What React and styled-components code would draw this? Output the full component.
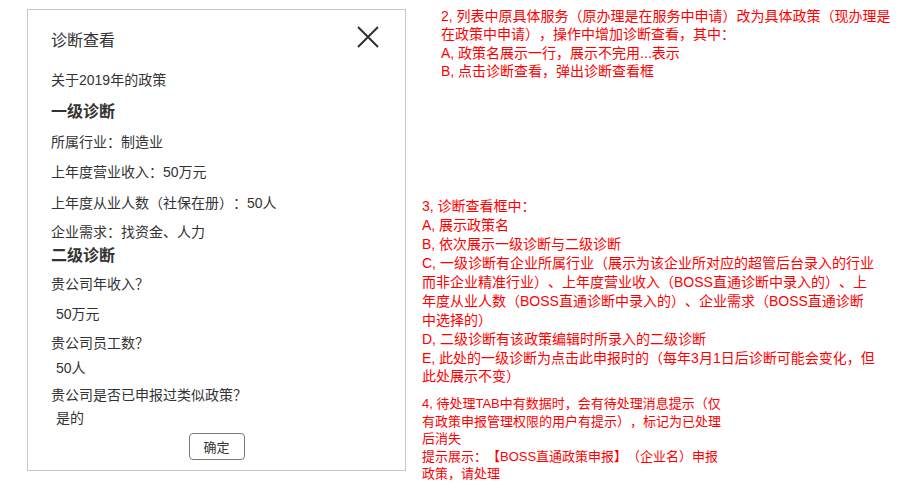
import React from 'react'
import styled, { createGlobalStyle } from 'styled-components'

const GlobalStyle = createGlobalStyle`
  body {
    margin: 0;
    background: #fff;
    font-family: "Liberation Sans", "Noto Sans CJK SC", sans-serif;
    text-spacing-trim: space-all;
  }
`

const firstNote = [
    '2, 列表中原具体服务（原办理是在服务中申请）改为具体政策（现办理是',
    '在政策中申请），操作中增加诊断查看，其中：',
    'A, 政策名展示一行，展示不完用...表示',
    'B, 点击诊断查看，弹出诊断查看框',
]

const secondNote = [
    '3, 诊断查看框中：',
    'A, 展示政策名',
    'B, 依次展示一级诊断与二级诊断',
    'C, 一级诊断有企业所属行业（展示为该企业所对应的超管后台录入的行业',
    '而非企业精准行业）、上年度营业收入（BOSS直通诊断中录入的）、上',
    '年度从业人数（BOSS直通诊断中录入的）、企业需求（BOSS直通诊断',
    '中选择的）',
    'D, 二级诊断有该政策编辑时所录入的二级诊断',
    'E, 此处的一级诊断为点击此申报时的（每年3月1日后诊断可能会变化，但',
    '此处展示不变）',
]

const thirdNote = [
    '4, 待处理TAB中有数据时，会有待处理消息提示（仅',
    '有政策申报管理权限的用户有提示），标记为已处理',
    '后消失',
    '提示展示：【BOSS直通政策申报】（企业名）申报',
    '政策，请处理',
]

const CloseIcon = () => (
    <svg width="22" height="22" viewBox="0 0 22 22">
        <path d="M1 1 L21 21 M21 1 L1 21" stroke="#2f2f3a" strokeWidth="2" fill="none" />
    </svg>
)

const App = () => {
    return (
        <Page>
            <GlobalStyle />
            <Modal>
                <Header>
                    <Title>诊断查看</Title>
                    <CloseButton><CloseIcon /></CloseButton>
                </Header>
                <Body>
                    <Line $mt={17}>关于2019年的政策</Line>
                    <Heading $mt={11}>一级诊断</Heading>
                    <Line $mt={9}>所属行业：制造业</Line>
                    <Line $mt={10}>上年度营业收入：50万元</Line>
                    <Line $mt={11}>上年度从业人数（社保在册）：50人</Line>
                    <Line $mt={9}>企业需求：找资金、人力</Line>
                    <Heading $mt={3}>二级诊断</Heading>
                    <Line $mt={7}>贵公司年收入？</Line>
                    <Line $mt={10} $answer>50万元</Line>
                    <Line $mt={9}>贵公司员工数？</Line>
                    <Line $mt={5} $answer>50人</Line>
                    <Line $mt={7}>贵公司是否已申报过类似政策？</Line>
                    <Line $mt={3} $answer>是的</Line>
                    <Footer>
                        <OkButton>确定</OkButton>
                    </Footer>
                </Body>
            </Modal>
            <Notes>
                <NoteBlock $indent={19} $lh={18.33}>
                    {firstNote.map((l) => <NoteLine key={l}>{l}</NoteLine>)}
                </NoteBlock>
                <NoteBlock $mt={117} $lh={18.9}>
                    {secondNote.map((l) => <NoteLine key={l}>{l}</NoteLine>)}
                </NoteBlock>
                <NoteBlock $mt={9} $lh={17.4} $size={13}>
                    {thirdNote.map((l) => <NoteLine key={l}>{l}</NoteLine>)}
                </NoteBlock>
            </Notes>
        </Page>
    )
}

const Page = styled.div`
    display: flex;
    align-items: flex-start;
    padding-left: 27px;
    width: 911px;
    height: 496px;
    box-sizing: border-box;
    overflow: hidden;
`

const Modal = styled.div`
    margin-top: 9px;
    width: 379px;
    height: 462px;
    box-sizing: border-box;
    border: 1px solid #c8c8c8;
    display: flex;
    flex-direction: column;
    color: #333;
    flex-shrink: 0;
`

const Header = styled.div`
    display: flex;
    justify-content: space-between;
    align-items: flex-start;
    padding: 19px 26px 0 23px;
`

const Title = styled.div`
    font-size: 16px;
    line-height: 24px;
    color: #333;
`

const CloseButton = styled.div`
    margin-top: -3px;
    width: 22px;
    height: 22px;
    cursor: pointer;
    svg { display: block; }
`

const Body = styled.div`
    display: flex;
    flex-direction: column;
    padding: 0 23px;
`

const Line = styled.p`
    margin: ${(p) => p.$mt || 0}px 0 0;
    padding-left: ${(p) => (p.$answer ? 5 : 0)}px;
    font-size: 14px;
    line-height: 20px;
    color: #333;
    white-space: nowrap;
`

const Heading = styled.h3`
    margin: ${(p) => p.$mt || 0}px 0 0;
    font-size: 16px;
    line-height: 22px;
    font-weight: 700;
    color: #333;
`

const Footer = styled.div`
    display: flex;
    justify-content: center;
    margin-top: 5px;
`

const OkButton = styled.button`
    width: 56px;
    height: 27px;
    padding: 0;
    border: 1px solid #7a7a7a;
    border-radius: 4px;
    background: #fff;
    color: #333;
    font-family: inherit;
    font-size: 13px;
    text-spacing-trim: space-all;
    cursor: pointer;
`

const Notes = styled.div`
    margin-left: 16px;
    padding-top: 7px;
    display: flex;
    flex-direction: column;
`

const NoteBlock = styled.div`
    margin-top: ${(p) => p.$mt || 0}px;
    padding-left: ${(p) => p.$indent || 0}px;
    font-size: ${(p) => p.$size || 14}px;
    line-height: ${(p) => p.$lh}px;
    color: #f00;
`

const NoteLine = styled.span`
    display: block;
    white-space: nowrap;
`

export default App
